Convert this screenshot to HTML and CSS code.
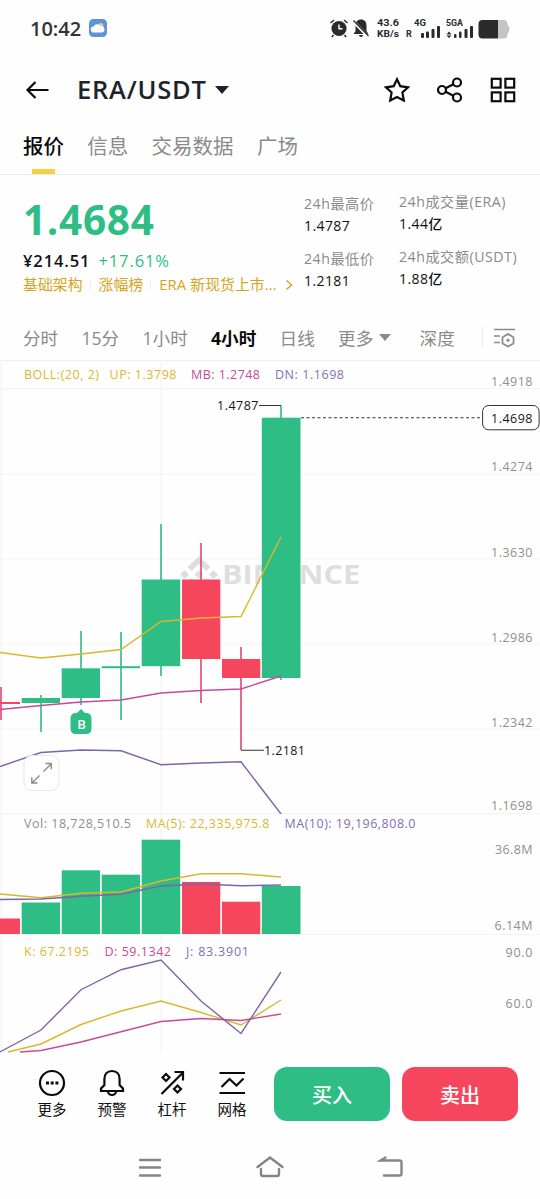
FILE: index.html
```html
<!DOCTYPE html>
<html lang="zh-CN">

<head>
    <meta charset="UTF-8">
    <meta name="viewport" content="width=device-width, initial-scale=1.0">
    <title>ERA/USDT</title>
    <link rel="stylesheet" href="styles.css">
</head>

<body>
    <div class="status-bar">
        <span class="clock">10:42</span>
        <svg class="weather" width="18" height="18" viewBox="0 0 18 18">
            <rect width="18" height="18" rx="4.5" fill="#5b93dc"/>
            <circle cx="11.8" cy="6.6" r="2.6" fill="#f3c77c"/>
            <path d="M5 13.5a3 3 0 0 1-.4-6A3.900 3.900 0 0 1 11.500 7.300a3.100 3.100 0 0 1 1.500 6.200z" fill="#fff"/>
        </svg>
        <div class="status-icons">
            <svg width="20" height="20" viewBox="0 0 20 20">
                <circle cx="10" cy="10.500" r="7.600" fill="#2b2b2b"/>
                <path d="M10 6.500v4.300h3.500" fill="none" stroke="#fff" stroke-width="1.500"/>
                <path d="M1.500 5l3.500-3M18.500 5L15 2M4.500 17l-1.700 2M15.500 17l1.700 2" stroke="#2b2b2b" stroke-width="1.500"/>
            </svg>
            <svg width="18" height="20" viewBox="0 0 18 20">
                <path d="M9 1.500c-3.600 0-5.500 2.500-5.500 6V13l-2 3h15l-2-3V7.500c0-3.500-1.900-6-5.500-6zM7 17h4a2 2 0 0 1-4 0z" fill="#2b2b2b"/>
                <path d="M.5 2.500l16 16.500" stroke="#fff" stroke-width="3"/>
                <path d="M1.500 2.500l15 15.500" stroke="#2b2b2b" stroke-width="1.300"/>
            </svg>
            <svg class="signal" width="133" height="22" viewBox="-29 0 133 22">
                <g class="signal-text">
                    <text x="-29" y="9" textLength="22" lengthAdjust="spacingAndGlyphs">43.6</text>
                    <text x="-29" y="20" textLength="22" lengthAdjust="spacingAndGlyphs">KB/s</text>
                    <text x="0" y="20" textLength="6">R</text>
                    <text x="8" y="9" textLength="12" lengthAdjust="spacingAndGlyphs">4G</text>
                    <text x="40" y="9" textLength="17" lengthAdjust="spacingAndGlyphs">5GA</text>
                </g>
                <g fill="#2b2b2b">
                    <rect x="15" y="16" width="3" height="5" rx="1"/>
                    <rect x="20" y="14.500" width="3" height="6.500" rx="1"/>
                    <rect x="25.500" y="12" width="3" height="9" rx="1"/>
                    <rect x="31" y="9" width="3" height="12" rx="1"/>
                    <path d="M40.500 17.500L43 14.500l2.500 3zM40.500 18.500L43 21l2.500-2.500z"/>
                    <rect x="48" y="17" width="2.500" height="4" rx="1"/>
                    <rect x="53" y="14.500" width="2.500" height="6.500" rx="1"/>
                    <rect x="58.500" y="12" width="3" height="9" rx="1"/>
                    <rect x="64" y="9" width="3" height="12" rx="1"/>
                    <path d="M92 3h5.500a4 4 0 0 1 4 4v.5q2 1.500 2 4.500t-2 4.500v1a4 4 0 0 1-4 4H92z" fill="#c4c4c4"/>
                    <path d="M76.500 3H92v18.500H76.500a4 4 0 0 1-4-4V7a4 4 0 0 1 4-4z"/>
                </g>
            </svg>
        </div>
    </div>

    <header class="header">
        <svg width="24" height="20" viewBox="0 0 24 20" class="line-icon">
            <path d="M10.500 2L2.500 10l8 8M3 10h20.500"/>
        </svg>
        <h1>ERA/USDT</h1>
        <span class="caret"></span>
        <div class="header-actions">
            <svg width="26" height="26" viewBox="0 0 26 26" class="line-icon">
                <path d="M13 2.200l3.300 7 7.700 1.100-5.600 5.200 1.400 8L13 20l-6.800 3.500 1.400-8L2 10.300l7.700-1.100z"/>
            </svg>
            <svg width="26" height="26" viewBox="0 0 26 26" class="line-icon">
                <circle cx="5" cy="13" r="4"/>
                <circle cx="20" cy="5.500" r="4"/>
                <circle cx="20" cy="20.500" r="4"/>
                <path d="M8.600 11.200l7.800-3.900M8.600 14.800l7.800 3.900"/>
            </svg>
            <svg width="26" height="26" viewBox="0 0 26 26" class="line-icon">
                <rect x="1.800" y="1.800" width="8.800" height="8.800"/>
                <rect x="15.400" y="1.800" width="8.800" height="8.800"/>
                <rect x="1.800" y="15.400" width="8.800" height="8.800"/>
                <rect x="15.400" y="15.400" width="8.800" height="8.800"/>
            </svg>
        </div>
    </header>

    <nav class="tabs">
        <span class="tab active">报价</span>
        <span class="tab">信息</span>
        <span class="tab">交易数据</span>
        <span class="tab">广场</span>
    </nav>

    <section class="summary">
        <div class="price-box">
            <div class="price">1.4684</div>
            <div class="price-sub"><span>¥214.51</span><span class="up">+17.61%</span></div>
            <div class="tags">
                <span>基础架构</span>
                <span>涨幅榜</span>
                <span>ERA 新现货上市...</span>
                <svg width="8" height="12" viewBox="0 0 8 12"><path d="M1.500 1.500L6.500 6l-5 4.500"/></svg>
            </div>
        </div>
        <dl class="stats">
            <dt>24h最高价</dt>
            <dd>1.4787</dd>
            <dt>24h最低价</dt>
            <dd>1.2181</dd>
        </dl>
        <dl class="stats stats-right">
            <dt>24h成交量(ERA)</dt>
            <dd>1.44亿</dd>
            <dt>24h成交额(USDT)</dt>
            <dd>1.88亿</dd>
        </dl>
    </section>

    <nav class="intervals">
        <span>分时</span>
        <span>15分</span>
        <span>1小时</span>
        <span class="active">4小时</span>
        <span>日线</span>
        <span class="more">更多<i class="caret small"></i></span>
        <span>深度</span>
        <i class="divider"></i>
        <svg width="24" height="20" viewBox="0 0 24 20">
            <path d="M1 1.500h21M1 8h6M1 14.500h6M15 6l5.500 3.200v6.200L15 18.600l-5.500-3.200V9.200z"/>
            <path d="M15 10.300l2 2-2 2-2-2z" class="dot"/>
        </svg>
    </nav>

    <main class="charts">
        <!-- Candles + BOLL -->
        <svg width="540" height="453" viewBox="0 361 540 453">
            <path class="grid" d="M0 388.500h540M0 474h540M0 559h540M0 644h540M0 729h540M0 813.500h540M1 361v453M161 361v453"/>
            <g fill="#dedede">
                <path d="M199 556.500l11.500 10.500-4 4-7.500-7-7.500 7-4-4zM184.500 570l4.500 4.500-4.500 4.500-4.500-4.500zM199 570l4.500 4.500-4.500 4.500-4.500-4.500zM213.500 570l4.500 4.500-4.500 4.500-4.500-4.500zM187.500 582l4-4 7.500 7 7.500-7 4 4-11.500 10.500z"/>
                <text class="watermark" x="222" y="584" textLength="138" lengthAdjust="spacingAndGlyphs">BINANCE</text>
            </g>
            <g class="sell">
                <path d="M1 687v33M201 543v160M241 647v103"/>
                <rect x="0" y="702" width="20" height="2"/>
                <rect x="182" y="579.500" width="38.300" height="79.500"/>
                <rect x="222" y="659" width="38.300" height="19"/>
            </g>
            <g class="buy">
                <path d="M41 695v37M81 631v74M121 632v88M161 524v152M281 405.500V680"/>
                <rect x="21.700" y="698" width="38.300" height="5"/>
                <rect x="61.700" y="668.300" width="38.300" height="29.700"/>
                <rect x="101.700" y="666.200" width="38.300" height="2"/>
                <rect x="141.700" y="579.500" width="38.500" height="86.700"/>
                <rect x="261.800" y="417.700" width="38.700" height="260.300"/>
            </g>
            <polyline class="line yellow" points="0,652.500 41,658 81,654 121,649.500 161,621.500 201,618 241,616.500 281,537"/>
            <polyline class="line pink" points="0,709.500 41,705.500 81,702 121,700 161,693 201,690.500 241,689 281,676"/>
            <polyline class="line purple" points="0,766.500 41,752.500 81,750 121,750.800 161,764.700 201,763 241,761.800 281,814"/>

            <path class="pointer" d="M259 405.500h22M241 750.300h23"/>
            <path class="last-price" d="M301 417.700h182"/>
            <rect x="482.600" y="405.500" width="56.500" height="24.300" rx="6" fill="#fff" stroke="#333"/>
            <g class="label dark">
                <text x="217" y="410" textLength="41.500">1.4787</text>
                <text x="264" y="755" textLength="41">1.2181</text>
                <text x="491" y="422.500" textLength="41.500">1.4698</text>
            </g>
            <g class="label axis">
                <text x="491" y="386.300" textLength="41.500">1.4918</text>
                <text x="491" y="471.300" textLength="41.500">1.4274</text>
                <text x="491" y="556.500" textLength="41.500">1.3630</text>
                <text x="491" y="641.500" textLength="41.500">1.2986</text>
                <text x="491" y="726.500" textLength="41.500">1.2342</text>
                <text x="491" y="810" textLength="41.500">1.1698</text>
            </g>
            <g class="label">
                <text class="c-yellow" x="24" y="378.500" textLength="75">BOLL:(20, 2)</text>
                <text class="c-yellow" x="109.500" y="378.500" textLength="67">UP: 1.3798</text>
                <text class="c-pink" x="191" y="378.500" textLength="69">MB: 1.2748</text>
                <text class="c-purple" x="275" y="378.500" textLength="69">DN: 1.1698</text>
            </g>

            <path d="M81 709l4 4h1q5.500 0 5.500 5.500v10q0 5.500-5.500 5.500H76q-5.500 0-5.500-5.500v-10q0-5.500 5.500-5.500h1z" fill="#2ebd85"/>
            <text class="trade-mark" x="81.500" y="729" text-anchor="middle">B</text>

            <rect x="24" y="755.500" width="35" height="35" rx="8" fill="#fff" fill-opacity=".8" stroke="#e8e8e8"/>
            <path class="expand" d="M43.500 771.500l7.500-7.500M45.500 763.500h5.700v5.700M39.500 775.500l-7.500 7.500M37.500 783h-5.700v-5.700"/>
        </svg>

        <!-- Volume -->
        <svg width="540" height="121" viewBox="0 814 540 121">
            <path class="grid" d="M0 934.500h540M1 814v121M161 814v121"/>
            <g class="sell">
                <rect x="0" y="918.500" width="20" height="15.500"/>
                <rect x="182" y="882" width="38.300" height="52"/>
                <rect x="222" y="901.700" width="38.300" height="32.300"/>
            </g>
            <g class="buy">
                <rect x="21.700" y="902.500" width="38.300" height="31.500"/>
                <rect x="61.700" y="870.300" width="38.300" height="63.700"/>
                <rect x="101.700" y="874.700" width="38.300" height="59.300"/>
                <rect x="141.700" y="839.700" width="38.500" height="94.300"/>
                <rect x="261.800" y="886" width="38.700" height="48"/>
            </g>
            <polyline class="line yellow" points="0,894 41,897.700 81,893.200 121,892 161,881 201,873.800 241,873.700 281,877"/>
            <polyline class="line purple" points="0,899.500 41,899 81,896.300 121,894.300 161,886 201,884 241,885.800 281,885"/>
            <g class="label">
                <text class="c-gray" x="24" y="828" textLength="107">Vol: 18,728,510.5</text>
                <text class="c-yellow" x="146" y="828" textLength="123.500">MA(5): 22,335,975.8</text>
                <text class="c-purple" x="284.500" y="828" textLength="131">MA(10): 19,196,808.0</text>
                <text class="c-gray" x="495" y="853.500" textLength="37.500">36.8M</text>
                <text class="c-gray" x="494.500" y="930" textLength="38">6.14M</text>
            </g>
        </svg>

        <!-- KDJ -->
        <svg width="540" height="118" viewBox="0 935 540 118">
            <path class="grid" d="M1 935v118M161 935v118"/>
            <polyline class="line yellow" points="8,1052 41,1044 81,1024.500 121,1011 161,1001 201,1012.500 241,1025 281,1000"/>
            <polyline class="line pink" points="20,1052 41,1050.500 81,1042 121,1031.700 161,1021.500 201,1018.500 241,1020.500 281,1014"/>
            <polyline class="line purple" points="0,1052 41,1030 81,989.700 121,969.700 161,960 201,1001 241,1033.500 281,972"/>
            <g class="label">
                <text class="c-yellow" x="24" y="955.500" textLength="65">K: 67.2195</text>
                <text class="c-pink" x="104.500" y="955.500" textLength="66.500">D: 59.1342</text>
                <text class="c-purple" x="186" y="955.500" textLength="63">J: 83.3901</text>
                <text class="c-gray" x="505.500" y="956.500" textLength="27">90.0</text>
                <text class="c-gray" x="505.500" y="1008" textLength="27">60.0</text>
            </g>
        </svg>
    </main>

    <footer class="actions">
        <div class="action">
            <svg width="28" height="28" viewBox="0 0 28 28" class="line-icon">
                <circle cx="14" cy="14" r="12"/>
                <path d="M8 14h3M12.700 14h3M17.400 14h3" stroke-width="3"/>
            </svg>
            <span>更多</span>
        </div>
        <div class="action">
            <svg width="28" height="28" viewBox="0 0 28 28" class="line-icon">
                <path d="M14 2c-5 0-7.600 3.500-7.600 8v6L3 19.500V22h22v-2.500L21.600 16v-6c0-4.500-2.600-8-7.600-8zM10 22.500a4 3.500 0 0 0 8 0"/>
            </svg>
            <span>预警</span>
        </div>
        <div class="action">
            <svg width="28" height="28" viewBox="0 0 28 28" class="line-icon">
                <path d="M3.500 25L24.500 4M16.500 3H25v8.500M8 5l3.500 3.500L8 12 4.500 8.500zM19.500 16.500L23 20l-3.500 3.500L16 20z"/>
            </svg>
            <span>杠杆</span>
        </div>
        <div class="action">
            <svg width="28" height="28" viewBox="0 0 28 28" class="line-icon">
                <path d="M1.500 4h25.500M1.500 24h25.500M3.500 18l8-8 7 6.500 7-7"/>
            </svg>
            <span>网格</span>
        </div>
        <button class="btn btn-buy">买入</button>
        <button class="btn btn-sell">卖出</button>
    </footer>

    <div class="system-nav">
        <svg width="30" height="26" viewBox="0 0 30 26"><path d="M5 5h20M5 12.500h20M5 20.500h20"/></svg>
        <svg width="30" height="26" viewBox="0 0 30 26"><path d="M2.500 12L15 2.500 27.500 12M6 14v5q0 2 2 2h14q2 0 2-2v-5"/></svg>
        <svg width="30" height="26" viewBox="0 0 30 26"><path d="M10.500 2.500L5.500 5.500H24.500q2 0 2 2v11q0 2-2 2H9"/></svg>
    </div>
</body>

</html>
```
FILE: styles.css
```css
* {
    box-sizing: border-box;
}

body {
    margin: 0;
    width: 540px;
    height: 1199px;
    overflow: hidden;
    background-color: #fefefe;
    color: #111;
    font-family: "Open Sans", "Noto Sans CJK SC", sans-serif;
}

svg {
    display: block;
    flex-shrink: 0;
}

.line-icon {
    fill: none;
    stroke: #0b0b0b;
    stroke-width: 2.2;
}

/* Status bar */
.status-bar {
    display: flex;
    align-items: center;
    height: 56px;
    padding: 0 30px;
}

.clock {
    width: 60px;
    font-size: 20px;
    font-weight: 600;
    color: #333;
}

.status-icons {
    display: flex;
    align-items: center;
    margin-left: 222px;
    gap: 3px;
}

.signal {
    margin-left: 4px;
}

.signal-text {
    font-family: Roboto, sans-serif;
    font-size: 9px;
    font-weight: 700;
    fill: #2b2b2b;
}

/* Header */
.header {
    display: flex;
    align-items: center;
    height: 68px;
    padding: 0 24px 0 25px;
}

.header h1 {
    margin: 0 9px 0 28px;
    width: 129px;
    font-size: 25.5px;
    line-height: 28px;
    font-weight: 600;
    letter-spacing: 0.8px;
    color: #1e2329;
    white-space: nowrap;
    padding-bottom: 2px;
}

.caret {
    border: 7px solid transparent;
    border-top: 8px solid #1e2329;
    border-bottom: 0;
}

.header-actions {
    display: flex;
    gap: 27px;
    margin-left: auto;
}

/* Tabs */
.tabs {
    display: flex;
    gap: 23.3px;
    height: 51px;
    padding: 0 23px;
    border-bottom: 1px solid #e9e9e9;
}

.tab {
    position: relative;
    line-height: 44px;
    font-size: 20.5px;
    color: #8a8a8a;
}

.tab.active {
    color: #0b0b0b;
    font-weight: 500;
}

.tab.active::after {
    content: "";
    position: absolute;
    left: 9px;
    bottom: 0;
    width: 23px;
    height: 5px;
    background-color: #f5d142;
}

/* Price summary */
.summary {
    display: flex;
    height: 140px;
}

.price-box {
    width: 304px;
    padding-left: 23px;
}

.price {
    height: 50px;
    margin-top: 19px;
    line-height: 52px;
    font-size: 40.5px;
    font-weight: 700;
    letter-spacing: 0.7px;
    color: #2ebd85;
}

.price-sub {
    display: flex;
    gap: 8px;
    margin-top: 5px;
    line-height: 24px;
    font-size: 16.5px;
    font-weight: 500;
    letter-spacing: 0.9px;
}

.price-sub span:first-child {
    font-weight: 600;
}

.up {
    color: #2ebd85;
}

.tags {
    display: flex;
    align-items: center;
    line-height: 23px;
    font-size: 14.8px;
    letter-spacing: 0.1px;
    color: #d4a521;
    white-space: nowrap;
}

.tags span + span {
    margin-left: 7px;
    padding-left: 9px;
    background: linear-gradient(#eee, #eee) left center / 1px 10px no-repeat;
}

.tags svg {
    margin-left: 8px;
    fill: none;
    stroke: #d4a521;
    stroke-width: 1.5;
}

.stats {
    width: 95px;
    margin: 18px 0 0;
    white-space: nowrap;
}

.stats-right {
    margin-top: 16px;
}

.stats dt {
    height: 22px;
    line-height: 22px;
    font-size: 14.2px;
    letter-spacing: 0.5px;
    color: #8a8a8a;
}

.stats dd {
    height: 22px;
    margin: 0 0 11px;
    line-height: 22px;
    font-size: 14px;
    font-weight: 500;
    letter-spacing: 0.4px;
    color: #111;
}

/* Interval selector */
.intervals {
    display: flex;
    align-items: center;
    height: 46px;
    padding: 0 0 2px 23px;
    font-size: 17.6px;
    color: #8a8a8a;
    gap: 23.3px;
    white-space: nowrap;
}

.intervals .active {
    color: #0b0b0b;
    font-weight: 700;
}

.more {
    display: flex;
    align-items: center;
    margin-right: 5px;
}

.caret.small {
    margin-left: 6px;
    border-width: 7px 6px 0;
    border-top-color: #8a8a8a;
}

.divider {
    width: 1px;
    height: 20px;
    margin-left: 4px;
    background-color: #ececec;
}

.intervals svg {
    margin: 2px 0 0 -13px;
    fill: none;
    stroke: #8a8a8a;
    stroke-width: 1.7;
}

.intervals .dot {
    fill: #8a8a8a;
    stroke: none;
}

/* Charts */
.charts {
    height: 692px;
    box-shadow: 0 -1px 0 #f0f0f0;
}

.grid {
    fill: none;
    stroke: #f3f3f3;
    stroke-width: 1.2;
}

.watermark {
    font-family: "Open Sans", sans-serif;
    font-size: 27px;
    font-weight: 700;
}

.buy {
    fill: #2ebd85;
    stroke: none;
}

.sell {
    fill: #f6465d;
    stroke: none;
}

.buy path {
    stroke: #2ebd85;
    stroke-width: 1.6;
}

.sell path {
    stroke: #e0486a;
    stroke-width: 1.6;
}

.line {
    fill: none;
    stroke-width: 1.4;
}

.yellow {
    stroke: #dcb62c;
}

.pink {
    stroke: #c74a9b;
}

.purple {
    stroke: #7a67ab;
}

.pointer {
    stroke: #333;
    stroke-width: 1.1;
}

.last-price {
    stroke: #333;
    stroke-width: 1.1;
    stroke-dasharray: 3 2.5;
}

.label {
    font-size: 12.5px;
}

.dark {
    fill: #161616;
}

.axis,
.c-gray {
    fill: #8f8f8f;
}

.c-yellow {
    fill: #d9b92f;
}

.c-pink {
    fill: #c74a9b;
}

.c-purple {
    fill: #8370b4;
}

.trade-mark {
    font-size: 13px;
    font-weight: 600;
    fill: #fff;
}

.expand {
    fill: none;
    stroke: #8a8a8a;
    stroke-width: 1.4;
}

/* Bottom actions */
.actions {
    display: flex;
    height: 82px;
    padding: 14px 0 0 22px;
}

.action {
    display: flex;
    flex-direction: column;
    align-items: center;
    width: 60px;
    padding-top: 2px;
    font-size: 14.5px;
    line-height: 25px;
    color: #111;
}

.btn {
    width: 116px;
    height: 54px;
    border: none;
    border-radius: 13px;
    padding: 0;
    color: #fff;
    font-family: inherit;
    font-size: 20px;
    font-weight: 500;
}

.btn-buy {
    margin-left: 12px;
    background-color: #2ebd85;
}

.btn-sell {
    margin-left: 12px;
    background-color: #f6465d;
}

/* System navigation */
.system-nav {
    display: flex;
    justify-content: center;
    gap: 90px;
    height: 64px;
    padding-top: 20px;
}

.system-nav svg {
    fill: none;
    stroke: #858585;
    stroke-width: 2.4;
    stroke-linecap: round;
}
```
